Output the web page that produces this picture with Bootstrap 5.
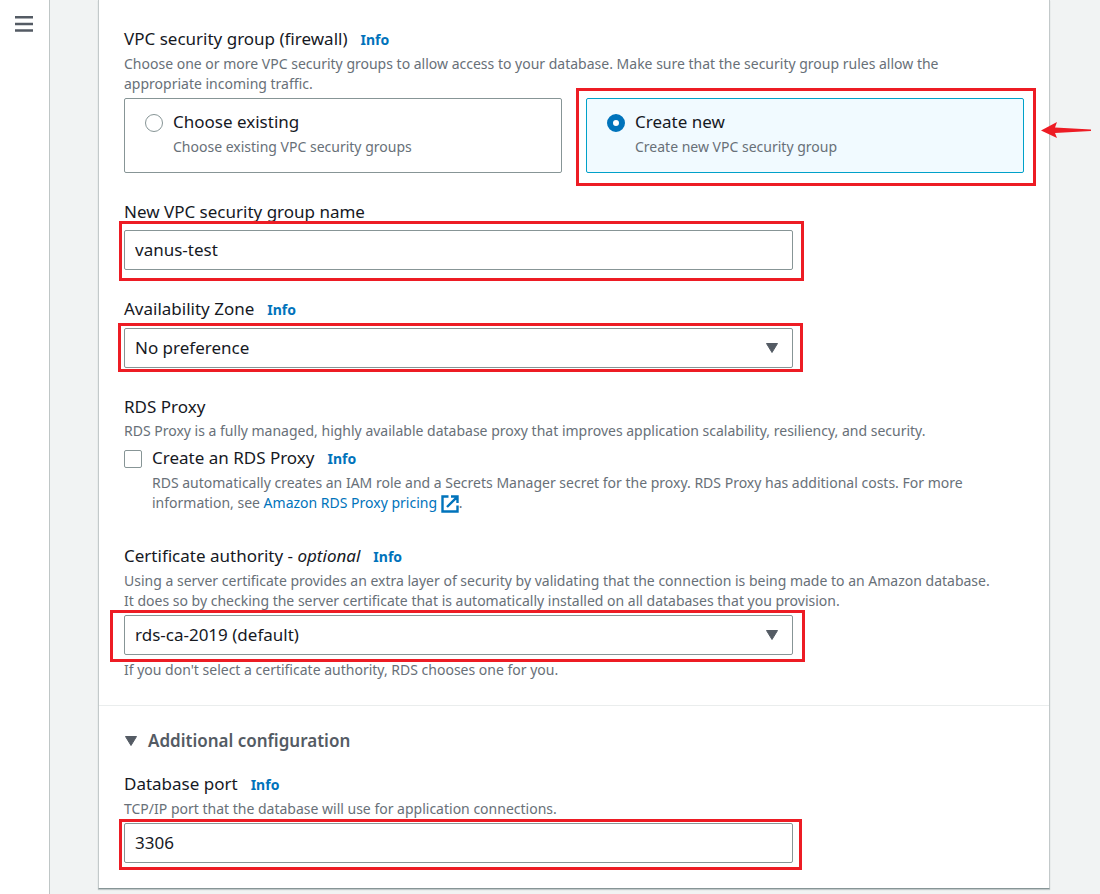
<!DOCTYPE html>
<html lang="en">
<head>
<meta charset="utf-8">
<meta name="viewport" content="width=device-width, initial-scale=1">
<title>Create database</title>
<link href="https://cdn.jsdelivr.net/npm/bootstrap@5.3.0/dist/css/bootstrap.min.css" rel="stylesheet">
<style>
  body { background: #f1f3f3; color: #16191f; font-family: "Noto Sans", "Open Sans", sans-serif; font-size: 17px; line-height: 25px; }
  a { color: #0073bb; text-decoration: none; }
  a:hover { text-decoration: underline; }

  .side-rail { flex: 0 0 50px; background: #fff; border-right: 1px solid #bfc6c6; padding: 16px 0 0 15px; }
  .menu-btn { display: block; line-height: 0; }
  .page-area { padding: 0 50px 5px 48px; }
  .panel { background: #fff; border: 1px solid #c3c9ca; border-top: 0; border-bottom-color: #879596; box-shadow: 0 1px 1px rgba(0, 28, 36, .2); }
  .panel-section { padding: 26px 25px 25px; }
  .panel-section + .panel-section { border-top: 1px solid #eaeded; padding-top: 22px; }

  .field-group + .field-group { margin-top: 26px; }
  .field-label { display: block; margin-bottom: 2px; }
  .info-link { font-size: 14px; font-weight: 700; margin-left: 13px; }
  .hint { color: #687078; font-size: 14px; line-height: 20px; margin: 0; }
  .control-box { margin-top: 4px; position: relative; }
  .check-row { gap: 10px; }
  .hint-below { margin-top: 5px; }

  .form-control, .form-select { height: 40px; border: 1px solid #879596; border-radius: 2px; padding: 0 10px 2px; color: #16191f; font-size: 17px; line-height: 25px; }
  .form-select { padding-right: 40px; background-size: 14px 12px; background-position: right 13px center;
    background-image: url("data:image/svg+xml,%3Csvg xmlns='http://www.w3.org/2000/svg' viewBox='0 0 14 12'%3E%3Cpath d='M1.5 1.5h11L7 10.5z' fill='%23545b64' stroke='%23545b64' stroke-linejoin='round'/%3E%3C/svg%3E"); }

  .choice-tile { border: 1px solid #879596; border-radius: 2px; padding: 10px 20px 15px; gap: 10px; cursor: pointer; }
  .choice-tile .hint { margin-top: 3px; }
  .choice-tile.selected { border-color: #00a1c9; background: #f1faff; }
  .form-check-input { flex: none; width: 18px; height: 18px; margin: 5px 0 0; border: 1px solid #879596; background-color: #fff; }
  .form-check-input[type=checkbox] { border-radius: 2px; }
  .form-check-input[type=radio]:checked { border: 6px solid #0073bb; background: #fff; }

  .expand-btn { color: #545b64; font-size: 17px; font-weight: 600; line-height: 25px; gap: 10px; margin-bottom: 18px; }

  /* red review marks laid over the controls */
  .review-mark { position: absolute; border: 3px solid #ed1c24; pointer-events: none; z-index: 2; }
  .mark-tile { inset: -11px -13px -14px -11px; }
  .mark-name { inset: -9px -11px -11px -5px; }
  .mark-zone { inset: -5px -10px -4px -6px; }
  .mark-cert { inset: -5px -12px -7px -14px; }
  .mark-port { inset: -4px -9px -7px -5px; }
  .mark-arrow { position: absolute; left: 100%; top: 22px; margin-left: 18px; z-index: 2; }
</style>
</head>
<body>
<div class="d-flex min-vh-100">
  <nav class="side-rail" aria-label="Service navigation">
    <button type="button" class="menu-btn btn p-0 border-0" aria-label="Open navigation">
      <svg width="18" height="16" viewBox="0 0 18 16" fill="#545b64"><path d="M0 0h18v2.500H0zM0 6.700h18v2.500H0zM0 13.200h18v2.500H0z"/></svg>
    </button>
  </nav>

  <main class="page-area flex-grow-1">
    <form class="panel">
      <section class="panel-section">
        <div class="field-group" role="radiogroup" aria-labelledby="sg-label">
          <div class="field-label"><span id="sg-label">VPC security group (firewall)</span><a href="#" class="info-link">Info</a></div>
          <p class="hint">Choose one or more VPC security groups to allow access to your database. Make sure that the security group rules allow the<br>appropriate incoming traffic.</p>
          <div class="control-box row gx-4">
            <div class="col-6">
              <label class="choice-tile d-flex" for="sg-existing">
                <input class="form-check-input" type="radio" name="sg" id="sg-existing">
                <span><span class="d-block">Choose existing</span><span class="hint d-block">Choose existing VPC security groups</span></span>
              </label>
            </div>
            <div class="col-6">
              <label class="choice-tile selected d-flex position-relative" for="sg-new">
                <input class="form-check-input" type="radio" name="sg" id="sg-new" checked>
                <span><span class="d-block">Create new</span><span class="hint d-block">Create new VPC security group</span></span>
                <span class="review-mark mark-tile"></span>
                <svg class="mark-arrow" width="51" height="18" viewBox="0 0 51 18" fill="#ed1c24" aria-hidden="true"><path d="M0 9.500 16 1l-2 5.500L50 8.500v1.500L14 12l2 5z"/></svg>
              </label>
            </div>
          </div>
        </div>

        <div class="field-group">
          <label class="field-label" for="sg-name">New VPC security group name</label>
          <div class="row gx-4"><div class="col-9"><div class="control-box">
            <input type="text" class="form-control" id="sg-name" value="vanus-test">
            <span class="review-mark mark-name"></span>
          </div></div></div>
        </div>

        <div class="field-group">
          <div class="field-label"><label for="zone">Availability Zone</label><a href="#" class="info-link">Info</a></div>
          <div class="row gx-4"><div class="col-9"><div class="control-box">
            <select class="form-select" id="zone"><option>No preference</option></select>
            <span class="review-mark mark-zone"></span>
          </div></div></div>
        </div>

        <div class="field-group">
          <div class="field-label">RDS Proxy</div>
          <p class="hint">RDS Proxy is a fully managed, highly available database proxy that improves application scalability, resiliency, and security.</p>
          <div class="control-box check-row d-flex">
            <input class="form-check-input" type="checkbox" id="proxy">
            <div>
              <div class="field-label"><label for="proxy">Create an RDS Proxy</label><a href="#" class="info-link">Info</a></div>
              <p class="hint">RDS automatically creates an IAM role and a Secrets Manager secret for the proxy. RDS Proxy has additional costs. For more<br>information, see <a href="#">Amazon RDS Proxy pricing
                <svg width="18" height="18" viewBox="0 0 18 18" fill="none" stroke="#0073bb" stroke-width="2.400" aria-hidden="true"><path d="M7.500 1.500h-6v15h15v-6M10 1.500h6.500V8M16.200 1.800 6 12"/></svg></a>.</p>
            </div>
          </div>
        </div>

        <div class="field-group pt-1">
          <div class="field-label"><label for="cert">Certificate authority - <em>optional</em></label><a href="#" class="info-link">Info</a></div>
          <p class="hint">Using a server certificate provides an extra layer of security by validating that the connection is being made to an Amazon database.<br>It does so by checking the server certificate that is automatically installed on all databases that you provision.</p>
          <div class="row gx-4"><div class="col-9"><div class="control-box">
            <select class="form-select" id="cert"><option>rds-ca-2019 (default)</option></select>
            <span class="review-mark mark-cert"></span>
          </div></div></div>
          <p class="hint hint-below">If you don't select a certificate authority, RDS chooses one for you.</p>
        </div>
      </section>

      <section class="panel-section">
        <button type="button" class="expand-btn btn p-0 border-0 d-flex align-items-center" aria-expanded="true">
          <svg width="14" height="12" viewBox="0 0 14 12" fill="#545b64" stroke="#545b64" stroke-linejoin="round" aria-hidden="true"><path d="M1.500 1.500h11L7 10.500z"/></svg>
          Additional configuration
        </button>
        <div class="field-group mt-0">
          <div class="field-label"><label for="port">Database port</label><a href="#" class="info-link">Info</a></div>
          <p class="hint">TCP/IP port that the database will use for application connections.</p>
          <div class="row gx-4"><div class="col-9"><div class="control-box">
            <input type="text" inputmode="numeric" class="form-control" id="port" value="3306">
            <span class="review-mark mark-port"></span>
          </div></div></div>
        </div>
      </section>
    </form>
  </main>
</div>
<script src="https://cdn.jsdelivr.net/npm/bootstrap@5.3.0/dist/js/bootstrap.bundle.min.js"></script>
</body>
</html>
